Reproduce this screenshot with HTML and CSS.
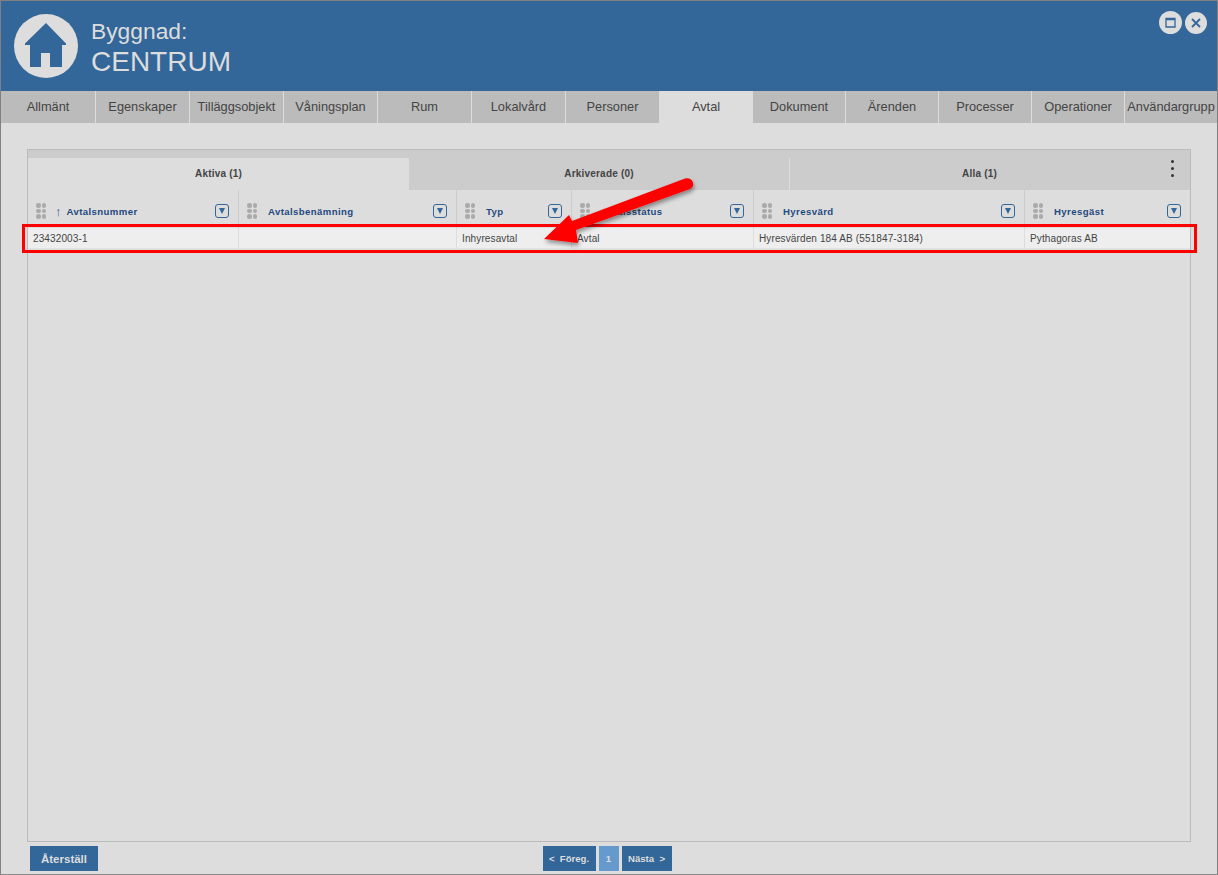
FILE: index.html
```html
<!DOCTYPE html>
<html lang="sv">
<head>
<meta charset="utf-8">
<title>Byggnad: CENTRUM</title>
<link rel="stylesheet" href="styles.css">
</head>
<body>
<div class="frame">
  <header class="head">
    <div class="logo">
      <svg width="64" height="64" viewBox="0 0 64 64"><circle cx="32" cy="32" r="32" fill="#ddd"/><path d="M32 9 L52 29.500 L52 31 L48 31 L48 53 L36 53 L36 39 L27 39 L27 53 L16 53 L16 31 L11 31 L11 29.500 Z" fill="#336699"/></svg>
    </div>
    <div class="titles">
      <div class="t1">Byggnad:</div>
      <div class="t2">CENTRUM</div>
    </div>
    <div class="winbtns">
      <svg class="winbtn" width="23" height="23" viewBox="0 0 23 23"><circle cx="11.500" cy="11.500" r="11.500" fill="#ddd"/><path d="M7 7.500h9v8.500h-9z M7 8.500h9" fill="none" stroke="#336699" stroke-width="1.300"/></svg>
      <svg class="winbtn" width="22" height="22" viewBox="0 0 22 22"><circle cx="11" cy="11" r="11" fill="#ddd"/><path d="M7 7l8 8M15 7l-8 8" fill="none" stroke="#336699" stroke-width="1.800"/></svg>
    </div>
  </header>
  <nav class="tabs">
    <div class="tab first">Allmänt</div>
    <div class="tab">Egenskaper</div>
    <div class="tab">Tilläggsobjekt</div>
    <div class="tab">Våningsplan</div>
    <div class="tab">Rum</div>
    <div class="tab">Lokalvård</div>
    <div class="tab">Personer</div>
    <div class="tab active">Avtal</div>
    <div class="tab">Dokument</div>
    <div class="tab">Ärenden</div>
    <div class="tab">Processer</div>
    <div class="tab">Operationer</div>
    <div class="tab last">Användargrupp</div>
  </nav>
  <main class="content">
    <section class="panel">
      <div class="subtabs">
        <div class="subtab on s1">Aktiva (1)</div>
        <div class="subtab s2">Arkiverade (0)</div>
        <div class="subtab s3">Alla (1)</div>
        <div class="kebab"><i></i><i></i><i></i></div>
      </div>
      <div class="grid ghead">
        <div class="hc"><span class="grip"><i></i><i></i><i></i><i></i><i></i><i></i></span><span class="sort">↑</span><span class="lbl">Avtalsnummer</span><span class="flt"><b></b></span></div>
        <div class="hc"><span class="grip"><i></i><i></i><i></i><i></i><i></i><i></i></span><span class="lbl">Avtalsbenämning</span><span class="flt"><b></b></span></div>
        <div class="hc"><span class="grip"><i></i><i></i><i></i><i></i><i></i><i></i></span><span class="lbl">Typ</span><span class="flt"><b></b></span></div>
        <div class="hc"><span class="grip"><i></i><i></i><i></i><i></i><i></i><i></i></span><span class="lbl">Avtalsstatus</span><span class="flt"><b></b></span></div>
        <div class="hc"><span class="grip"><i></i><i></i><i></i><i></i><i></i><i></i></span><span class="lbl">Hyresvärd</span><span class="flt"><b></b></span></div>
        <div class="hc end"><span class="grip"><i></i><i></i><i></i><i></i><i></i><i></i></span><span class="lbl">Hyresgäst</span><span class="flt"><b></b></span></div>
      </div>
      <div class="grid grow">
        <div class="dc">23432003-1</div>
        <div class="dc"></div>
        <div class="dc">Inhyresavtal</div>
        <div class="dc">Avtal</div>
        <div class="dc">Hyresvärden 184 AB (551847-3184)</div>
        <div class="dc end">Pythagoras AB</div>
      </div>
    </section>
    <footer class="foot">
      <button class="btn reset">Återställ</button>
      <div class="pager">
        <button class="btn pg prev">&lt;&nbsp; Föreg.</button>
        <button class="btn pg cur">1</button>
        <button class="btn pg next">Nästa &nbsp;&gt;</button>
      </div>
    </footer>
  </main>
  <div class="redbox"></div>
  <svg class="arrow" width="180" height="90" viewBox="0 0 180 90">
    <defs><filter id="sh" x="-20%" y="-20%" width="140%" height="150%"><feDropShadow dx="1" dy="3" stdDeviation="2" flood-color="#000" flood-opacity=".4"/></filter></defs>
    <path d="M14 64 L39 40 L42 46 L155 3.500 Q161 2.500 163 7.500 Q164 12 160 14 L46 55 L48 68 Z" fill="#f00" filter="url(#sh)"/>
  </svg>
</div>
</body>
</html>
```
FILE: styles.css
```css
* { box-sizing: border-box; }
html, body { margin: 0; padding: 0; }
body { font-family: "Liberation Sans", Arial, sans-serif; background: #ddd; }
.frame { position: relative; width: 1218px; height: 875px; border: 1px solid #808080; border-bottom-color: #8a8a8a; background: #ddd; display: flex; flex-direction: column; overflow: hidden; }
.head { position: relative; height: 90px; background: #336699; display: flex; align-items: flex-start; padding: 13px 0 0 13px; flex: none; }
.logo { width: 64px; height: 64px; flex: none; }
.logo svg { display: block; }
.titles { margin-left: 13px; color: #ddd; padding-top: 4px; }
.t1 { font-size: 22.800px; line-height: 27px; }
.t2 { font-size: 28px; line-height: 34px; }
.winbtns { position: absolute; top: 10px; right: 10px; display: flex; gap: 3px; align-items: center; }
.winbtn { display: block; }
.tabs { display: flex; height: 32px; background: #bbb; flex: none; }
.tab { width: 94px; flex: none; display: flex; align-items: center; justify-content: center; font-size: 12.800px; color: #444; border-right: 1px solid #ddd; white-space: nowrap; padding-bottom: 2px; }
.tab.first { width: 95px; }
.tab:nth-child(n+9) { width: 93px; }
.tab.active { background: #ddd; border-right-color: #ddd; width: 93px; }
.tab.last { border-right: 0; flex: 1; }
.content { flex: 1; display: flex; flex-direction: column; padding: 26px 26px 3px; min-height: 0; }
.panel { position: relative; flex: 1; border: 1px solid #bbb; padding-top: 8px; background: linear-gradient(#ccc 40px, #ddd 40px); }
.subtabs { display: flex; height: 32px; }
.subtab { display: flex; align-items: center; justify-content: center; font-size: 10px; font-weight: bold; color: #444; background: #ccc; letter-spacing: .2px; padding-bottom: 1px; }
.subtab.on { background: #ddd; }
.s1 { width: 381px; }
.s2 { width: 381px; border-right: 1px solid #ddd; }
.s3 { flex: 1; padding-right: 21px; }
.kebab { position: absolute; top: 10px; right: 16px; display: flex; flex-direction: column; gap: 4px; }
.kebab i { display: block; width: 3px; height: 3px; border-radius: 50%; background: #333; }
.grid { display: grid; grid-template-columns: 211px 218px 115px 182px 271px 1fr; }
.ghead { height: 38px; }
.hc { display: flex; align-items: center; padding: 0 9px 0 8px; border-right: 1px solid #ccc; }
.hc.end, .dc.end { border-right: 0; }
.grip { display: grid; grid-template-columns: 4.500px 4.500px; column-gap: 1px; row-gap: 1.200px; width: 10px; margin-right: 11px; margin-top: 4px; flex: none; }
.grip i { display: block; width: 4.500px; height: 4.500px; border-radius: 50%; background: #aaa; }
.sort { font-size: 13px; color: #336699; margin-right: 5px; margin-left: -2px; line-height: 1; margin-top: 4px; }
.lbl { font-size: 9.600px; font-weight: bold; color: #1f4a80; letter-spacing: .4px; white-space: nowrap; margin-top: 4px; }
.flt { margin-left: auto; width: 14px; height: 14px; border: 1px solid #336699; border-radius: 3px; display: flex; align-items: center; justify-content: center; margin-top: 3px; }
.flt b { width: 0; height: 0; border-left: 3.500px solid transparent; border-right: 3.500px solid transparent; border-top: 6px solid #336699; }
.grow { height: 21px; background: #eee; border-bottom: 1px solid #e2e2e2; }
.dc { font-size: 10px; color: #444; letter-spacing: .12px; display: flex; align-items: center; padding-left: 5px; border-right: 1px solid #ddd; white-space: nowrap; }
.foot { position: relative; flex: none; height: 29px; display: flex; align-items: flex-end; justify-content: center; }
.btn { border: 0; background: #336699; color: #ddd; font-family: inherit; padding: 0; margin: 0; }
.reset { position: absolute; left: 3px; bottom: 0; width: 68px; height: 25px; font-size: 11.500px; font-weight: bold; }
.pager { display: flex; gap: 3px; height: 25px; margin-right: 4px; }
.pg { height: 25px; font-size: 9.600px; font-weight: bold; }
.prev { width: 53px; }
.cur { width: 20px; background: #6699cc; }
.next { width: 50px; }
.redbox { position: absolute; left: 21px; top: 223px; width: 1175px; height: 29px; border: 3px solid #f00; }
.arrow { position: absolute; left: 529px; top: 174px; }
```
